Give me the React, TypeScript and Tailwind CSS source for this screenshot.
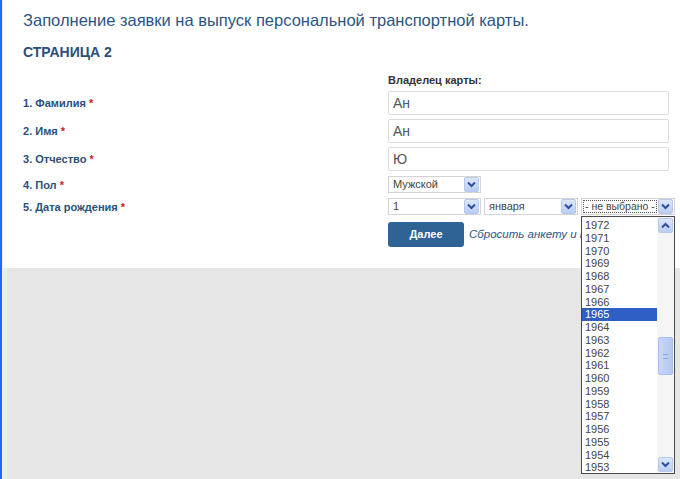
import React from 'react';

const font = { fontFamily: '"Liberation Sans", Arial, sans-serif' };

function Chevron({ up = false }: { up?: boolean }) {
  return (
    <svg width="9" height="7" viewBox="0 0 9 7">
      <polyline
        points={up ? '1,5.5 4.5,2 8,5.5' : '1,1.5 4.5,5 8,1.5'}
        fill="none"
        stroke="#2d4f9e"
        strokeWidth="2"
      />
    </svg>
  );
}

function ArrowBox({ up = false }: { up?: boolean }) {
  return (
    <div className="w-[15px] h-[15px] shrink-0 flex items-center justify-center bg-gradient-to-b from-[#dde7fb] to-[#b9cdf3] border border-[#b7c8ee] rounded-[2px]">
      <Chevron up={up} />
    </div>
  );
}

function Select({
  value,
  width,
  focused = false,
}: {
  value: string;
  width: string;
  focused?: boolean;
}) {
  return (
    <div
      className={`${width} h-[17px] flex items-center justify-between border border-[#d4d4d4] bg-white px-[1px]`}
    >
      <div
        className={`flex-1 min-w-0 h-[13px] flex items-center whitespace-nowrap overflow-hidden leading-none text-[#444] ${
          focused
            ? 'border border-dotted border-[#555] px-[1px] mr-[1px] text-[10.5px]'
            : 'px-[3px] mr-[2px] text-[11px]'
        }`}
      >
        {value}
      </div>
      <ArrowBox />
    </div>
  );
}

function Label({ n, text }: { n: number; text: string }) {
  return (
    <span className="text-[11px] leading-[14px] font-bold text-[#2b4f7c]">
      {n}. {text} <span className="text-[#d0202a]">*</span>
    </span>
  );
}

function TextInput({ value }: { value: string }) {
  return (
    <div className="w-[281px] h-[24px] border border-[#dcdcdc] rounded-[2px] bg-white flex items-center px-[4px] text-[14px] text-[#555]">
      {value}
    </div>
  );
}

const years = Array.from({ length: 20 }, (_, i) => 1972 - i);

function YearList() {
  return (
    <div className="absolute left-[581px] top-[216px] w-[94px] h-[258px] bg-white border border-[#4a4a4a] flex">
      <div className="flex-1 pt-[2px]">
        {years.map((y) => (
          <div
            key={y}
            className={`h-[12.75px] leading-[12.75px] pl-[3px] text-[11px] ${
              y === 1965 ? 'bg-[#2f5fc4] text-white' : 'text-[#444]'
            }`}
          >
            {y}
          </div>
        ))}
      </div>
      <div className="w-[17px] bg-[#f5f5f5] flex flex-col items-center py-[1px]">
        <ArrowBox up />
        <div className="flex-1 w-full relative">
          <div className="absolute left-[1px] top-[104px] w-[15px] h-[38px] bg-gradient-to-r from-[#c9d8f8] to-[#b3c7f1] border border-[#a9bdea] rounded-[2px] flex items-center justify-center">
            <div className="w-[5px] h-[5px] border-y border-[#8fa6d8]" />
          </div>
        </div>
        <ArrowBox />
      </div>
    </div>
  );
}

export default function App() {
  return (
    <div className="relative w-[680px] h-[479px] overflow-hidden bg-[#e6e6e6] flex" style={font}>
      <div className="w-[2px] bg-[#2366f5]" />
      <div className="flex-1 flex flex-col">
        <div className="h-[268px] bg-white border-l border-[#eeeeee] pl-[20px] pt-[10px]">
          <h1 className="text-[16.5px] leading-[20px] text-[#2b5585]">
            Заполнение заявки на выпуск персональной транспортной карты.
          </h1>
          <h2 className="mt-[14px] text-[14px] leading-[16px] font-bold text-[#2b4f7c]">
            СТРАНИЦА 2
          </h2>
          <div className="mt-[14px] grid grid-cols-[365px_1fr]">
            <div />
            <div className="h-[12px] leading-[12px] text-[11px] font-bold text-[#333]">
              Владелец карты:
            </div>
          </div>
          <div className="mt-[5px] flex flex-col gap-[4px]">
            {[
              ['Фамилия', 'Ан'],
              ['Имя', 'Ан'],
              ['Отчество', 'Ю'],
            ].map(([label, value], i) => (
              <div key={label} className="grid grid-cols-[365px_1fr] items-center">
                <Label n={i + 1} text={label} />
                <TextInput value={value} />
              </div>
            ))}
          </div>
          <div className="mt-[5px] h-[17px] grid grid-cols-[365px_1fr] items-center">
            <Label n={4} text="Пол" />
            <Select value="Мужской" width="w-[93px]" />
          </div>
          <div className="mt-[5px] h-[17px] grid grid-cols-[365px_1fr] items-center">
            <Label n={5} text="Дата рождения" />
            <div className="flex gap-[3px]">
              <Select value="1" width="w-[93px]" />
              <Select value="января" width="w-[94px]" />
              <Select value="- не выбрано -" width="w-[94px]" focused />
            </div>
          </div>
          <div className="mt-[7px] grid grid-cols-[365px_1fr] items-center">
            <div />
            <div className="flex items-center gap-[5px] whitespace-nowrap">
              <button className="w-[76px] h-[25px] shrink-0 rounded-[3px] bg-[#2f6396] text-white text-[11px] font-bold">
                Далее
              </button>
              <span className="w-[112px] overflow-hidden text-[11.5px] italic text-[#2b5585]">
                Сбросить анкету и начать заново
              </span>
            </div>
          </div>
        </div>
        <div className="flex-1 border-l-[5px] border-[#ececec]" />
      </div>
      <YearList />
    </div>
  );
}
